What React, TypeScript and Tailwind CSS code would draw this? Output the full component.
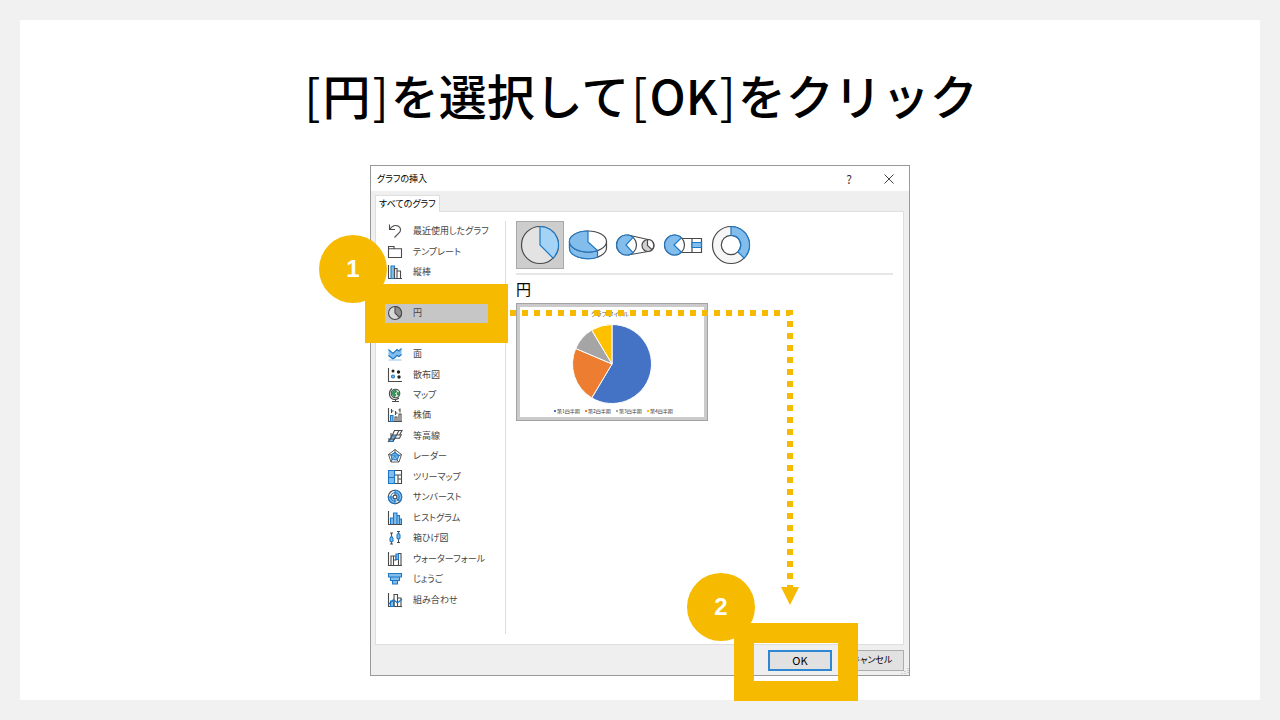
import type { ReactNode } from "react";

const INK = "#4a4a4a";
const BLUE = "#1f78c4";
const SKY = "#83bdec";

const UI_FONT =
  "font-['Noto_Sans_CJK_JP',sans-serif] [font-feature-settings:'palt']";

const Icon = ({ children }: { children: ReactNode }) => (
  <svg
    viewBox="0 0 16 16"
    className="size-4 shrink-0"
    fill="none"
    stroke={INK}
    strokeWidth="1.1"
    aria-hidden="true"
  >
    {children}
  </svg>
);

const AXES = "M1.5 1v13.5H15";

// null keeps the slot of a row that lies behind the highlight frame
const CATEGORIES: ({ label: string; icon: ReactNode } | null)[] = [
  {
    label: "最近使用したグラフ",
    icon: <path d="M2.5 1.500v5H8M2.800 6.300C5 3 8.500 1.500 11.500 3.200c3 1.900 2.300 5 .3 7L7.500 14.500" />,
  },
  {
    label: "テンプレート",
    icon: <path d="M1.500 13.500V2.500H7v2.200h7.500v8.800zM1.500 4.700H7" />,
  },
  {
    label: "縦棒",
    icon: (
      <>
        <path d={AXES} />
        <path d="M4 14.500V2h3.500v12.500z" fill={SKY} stroke={BLUE} />
        <path d="M7.500 14.500V4.500H10v10M10 7h3.500v7.500" />
      </>
    ),
  },
  null,
  {
    label: "円",
    icon: (
      <>
        <circle cx="8" cy="8" r="6.500" fill="#d8d8d8" />
        <path d="M8 1.500V8l4.600 4.600A6.500 6.500 0 0 0 8 1.500z" fill="#8f8f8f" />
      </>
    ),
  },
  null,
  {
    label: "面",
    icon: (
      <>
        <path d="M1.500 3.500L6 7.500l4-4 2 1.500 2.500-2.500V9L12 11l-2-1-4 3.500L1.500 10z" fill={SKY} stroke="none" />
        <path d="M1.500 3.500L6 7.500l4-4 2 1.500 2.500-2.500M1.500 9.500L6 13l4-3.500 2 1 2.500-2" stroke={BLUE} />
        <path d="M1.500 14h13" stroke="#9fc9ec" />
      </>
    ),
  },
  {
    label: "散布図",
    icon: (
      <>
        <path d={AXES} />
        <g fill="#222" stroke="none">
          <circle cx="6" cy="4" r="1.500" />
          <circle cx="11.500" cy="5" r="1.700" />
          <circle cx="12" cy="10" r="1.700" />
        </g>
        <circle cx="6" cy="9.500" r="1.500" fill={SKY} stroke={BLUE} />
      </>
    ),
  },
  {
    label: "マップ",
    icon: (
      <>
        <circle cx="8.500" cy="6.500" r="4.300" fill="#eef7f0" />
        <path d="M6 4l3-1 .5 2-2 1.500L9 8l-1.500 2L5 7zM10.500 5l1.500 1-.5 2.500-1.500-1z" fill="#2f9c57" stroke="#237a45" strokeWidth=".7" />
        <path d="M5 1.500C1.500 4 1.500 10 5.500 12c3 1.200 5 .2 6.500-1M8.500 12.500v2M5 14.500h7" />
      </>
    ),
  },
  {
    label: "株価",
    icon: (
      <>
        <path d={AXES} />
        <path d="M3.500 14.500V8.500H6v6z" fill={SKY} stroke={BLUE} />
        <path d="M8 14.500V10h2v4.500M12 14.500V7h2v7.500M4.500 2v4M8.500 4v4M8.500 6h2M4.500 4h2M13 1.500v4M11.500 3h1.500" />
      </>
    ),
  },
  {
    label: "等高線",
    icon: (
      <>
        <path d="M2 13.500L5 8h4l-3 5.500z" fill={SKY} stroke={BLUE} />
        <path d="M5 8l2.500-5.500H15L12.500 7H6M9 8l3-5.500M6 13.500L7.500 10l5 .2L14.500 6M4 5v6M1 11h7M1 14l2-3" />
      </>
    ),
  },
  {
    label: "レーダー",
    icon: (
      <>
        <path d="M8 1.500l6.500 5-2.500 7.500H4L1.500 6.500z" strokeWidth=".9" />
        <path d="M8 4.500l4 3-2 4.500L5 11.500 4 7z" fill={SKY} stroke={BLUE} />
        <path d="M8 1.500v3M14.500 6.500L12 7.500M12 14l-2-2M4 14l1-2.500M1.500 6.500L4 7" strokeWidth=".9" />
        <path d="M8 4.500V8l4-.5M8 8l2 4M8 8l-3 3.500M8 8L4 7" stroke={BLUE} strokeWidth=".6" />
      </>
    ),
  },
  {
    label: "ツリーマップ",
    icon: (
      <>
        <path d="M7.500 1.500h7v13h-7zM7.500 6h7M11 6v8.500M11 10h3.500" />
        <path d="M1.500 1.500h6v13h-6z" fill={SKY} stroke={BLUE} />
        <path d="M1.500 8.500h6" stroke={BLUE} />
      </>
    ),
  },
  {
    label: "サンバースト",
    icon: (
      <>
        <circle cx="8" cy="8" r="6.700" fill="#fff" />
        <path d="M8 1.300a6.700 6.700 0 0 1 4.700 11.400L8 8zM1.300 8A6.700 6.700 0 0 0 8 14.700V8z" fill={SKY} stroke={BLUE} />
        <circle cx="8" cy="8" r="4.200" stroke={BLUE} />
        <circle cx="8" cy="8" r="1.900" fill="#fff" />
      </>
    ),
  },
  {
    label: "ヒストグラム",
    icon: (
      <>
        <path d="M3.500 14.500V8h3v6.500zM6.500 14.500V3h3.500v11.500zM10 14.500v-9h2.500v9zM12.500 14.500V9h2v5.500z" fill={SKY} stroke={BLUE} />
        <path d={AXES} />
      </>
    ),
  },
  {
    label: "箱ひげ図",
    icon: (
      <>
        <path d="M4.500 3v11M3 3h3M3 14h3M11.500 1.500v11M10 1.500h3M10 12.500h3" />
        <path d="M3 8.500L4.500 6 6 8.500v2.500L4.500 12 3 11zM10 5l1.500-2L13 5v3l-1.500 1.500L10 8z" fill={SKY} stroke={BLUE} />
      </>
    ),
  },
  {
    label: "ウォーターフォール",
    icon: (
      <>
        <path d="M1.500 1v13.500H15M4 14.500V5h2.500v9.500M6.500 5H9v4H6.500M11.500 14.500V2.500H14v12" />
        <path d="M9 3h2.500v5.500H9z" fill={SKY} stroke={BLUE} />
      </>
    ),
  },
  {
    label: "じょうご",
    icon: (
      <path d="M1.500 2.500h13v3.500h-13zM3.500 6h9v3.500h-9zM5.500 9.500h5V13h-5z" fill={SKY} stroke={BLUE} />
    ),
  },
  {
    label: "組み合わせ",
    icon: (
      <>
        <path d={AXES} />
        <path d="M3.500 14.500V9H7v5.500z" fill={SKY} stroke={BLUE} />
        <path d="M7 14.500V2.500h3.500v12M10.500 6H14v8.500" />
        <path d="M2 12l4.500-4.500 4 3.500L15 7" stroke={BLUE} />
      </>
    ),
  },
];

const PIE_TYPES: { name: string; art: ReactNode }[] = [
  {
    name: "円",
    art: (
      <>
        <circle cx="24" cy="24" r="18.500" fill="#e3e3e3" />
        <path d="M24 5.500V24l13.100 13.100A18.500 18.500 0 0 0 24 5.500z" fill="#a5d3f5" stroke={BLUE} />
      </>
    ),
  },
  {
    name: "3-D 円",
    art: (
      <>
        <path d="M5.500 20.500v6.500a18.500 10.500 0 0 0 37 0v-6.500" fill="#fafafa" />
        <path d="M5.500 20.500v6.500a18.500 10.500 0 0 0 28 9.200V30z" fill={SKY} stroke={BLUE} />
        <ellipse cx="24" cy="20.500" rx="18.500" ry="10.500" fill="#fff" />
        <path d="M24 10a18.500 10.500 0 1 0 9.500 19.500L24 21z" fill={SKY} stroke={BLUE} />
      </>
    ),
  },
  {
    name: "補助円グラフ付き円",
    art: (
      <>
        <path d="M16 14l20 4.500M16 34l20-3.500" />
        <circle cx="14.500" cy="24" r="10" fill="#fff" />
        <path d="M21 16.300a10 10 0 1 0 0 15.400L14 24z" fill={SKY} stroke={BLUE} />
        <circle cx="36" cy="24.500" r="6" fill="#d0d0d0" />
        <path d="M35.500 18.500v6l4.500 4.200a6 6 0 0 0-4.500-10.200z" fill="#fff" />
      </>
    ),
  },
  {
    name: "補助縦棒グラフ付き円",
    art: (
      <>
        <path d="M20 17.500h21.500v14H20M32 17.500v14" />
        <circle cx="14.500" cy="24" r="10" fill="#fff" />
        <path d="M21.500 16.800a10 10 0 1 0 0 14.400L14 24z" fill={SKY} stroke={BLUE} />
        <path d="M32 21.500h9.500v5H32z" fill={SKY} stroke={BLUE} />
      </>
    ),
  },
  {
    name: "ドーナツ",
    art: (
      <>
        <circle cx="23" cy="24" r="14" stroke="#f6f6f6" strokeWidth="9" />
        <circle cx="23" cy="24" r="18.500" />
        <circle cx="23" cy="24" r="9.700" fill="#fff" />
        <path d="M23 5.500a18.500 18.500 0 0 1 13.100 31.600l-6.200-6.200A9.700 9.700 0 0 0 23 14.300z" fill={SKY} stroke={BLUE} />
      </>
    ),
  },
];

const QUARTERS = [
  { label: "第1四半期", value: 8.2, color: "#4472c4" },
  { label: "第2四半期", value: 3.2, color: "#ed7d31" },
  { label: "第3四半期", value: 1.4, color: "#a5a5a5" },
  { label: "第4四半期", value: 1.2, color: "#ffc000" },
];

const PieChart = () => {
  const total = QUARTERS.reduce((sum, q) => sum + q.value, 0);
  const point = (share: number) => {
    const a = share * Math.PI * 2;
    return `${92 + 39.5 * Math.sin(a)} ${57 - 39.5 * Math.cos(a)}`;
  };
  let start = 0;

  return (
    <svg viewBox="0 0 184 110" className="block w-full bg-white">
      <text x="90" y="9" textAnchor="middle" fontSize="6" fill="#595959">
        グラフ タイトル
      </text>
      {QUARTERS.map((q) => {
        const from = start / total;
        start += q.value;
        const to = start / total;
        return (
          <path
            key={q.label}
            d={`M92 57L${point(from)}A39.500 39.500 0 ${to - from > 0.5 ? 1 : 0} 1 ${point(to)}Z`}
            fill={q.color}
            stroke="#fff"
            strokeWidth="1"
          />
        );
      })}
      {QUARTERS.map((q, i) => (
        <g key={q.label}>
          <rect x={34 + i * 31} y="103" width="2" height="2" fill={q.color} />
          <text x={37 + i * 31} y="106" fontSize="5" fill="#333">
            {q.label}
          </text>
        </g>
      ))}
    </svg>
  );
};

const Bracket = ({ children }: { children: ReactNode }) => (
  <span className="px-0.5 font-normal">{children}</span>
);

const Step = ({ n, place }: { n: number; place: string }) => (
  <span
    className={`absolute flex size-[68px] items-center justify-center rounded-full bg-[#f6ba00] font-['Liberation_Sans',sans-serif] text-2xl font-bold text-white ${place}`}
  >
    {n}
  </span>
);

const ChartDialog = () => (
  <section
    aria-label="グラフの挿入"
    className={`flex min-h-[511px] flex-col border border-[#999] bg-[#efefef] text-[9px] leading-4 ${UI_FONT}`}
  >
    <header className="flex h-[25px] items-center bg-white pl-1.5 text-black">
      <span className="flex-1">グラフの挿入</span>
      <button type="button" aria-label="ヘルプ" className="w-10 text-xs text-[#333]">
        ?
      </button>
      <button type="button" aria-label="閉じる" className="flex w-10 justify-center">
        <svg viewBox="0 0 10 10" className="size-2.5" stroke="#444" fill="none">
          <path d="M.5.5l9 9M9.500.5l-9 9" />
        </svg>
      </button>
    </header>

    <div className="flex flex-1 flex-col pt-1 pr-[5px] pl-1">
      <button
        type="button"
        className="z-10 -mb-px self-start border border-b-0 border-[#dedede] bg-white px-[3px] text-black"
      >
        すべてのグラフ
      </button>
      <div className="flex flex-1 border border-[#dedede] bg-white pt-[9px] pr-2.5 pb-2.5">
        <ul className="mb-6 flex w-[129px] flex-col pr-4 pl-[9px]">
          {CATEGORIES.map((item, i) => (
            <li key={i} className="flex min-h-5 flex-1">
              {item && (
                <button
                  type="button"
                  className={`flex flex-1 items-center gap-2.5 pl-0.5 text-left whitespace-nowrap text-[#444] ${
                    item.label === "円" ? "bg-[#c6c6c6]" : ""
                  }`}
                >
                  <Icon>{item.icon}</Icon>
                  {item.label}
                </button>
              )}
            </li>
          ))}
        </ul>

        <div className="flex-1 border-l border-[#dcdcdc] pl-2.5">
          <div className="flex border-b-2 border-[#e6e6e6] pb-1">
            {PIE_TYPES.map((type, i) => (
              <button
                key={type.name}
                type="button"
                aria-label={type.name}
                className={`size-12 ${i === 0 ? "bg-[#cdcdcd] outline -outline-offset-1 outline-[#a8a8a8]" : ""}`}
              >
                <svg viewBox="0 0 48 48" fill="none" stroke={INK} strokeWidth="1.2">
                  {type.art}
                </svg>
              </button>
            ))}
          </div>
          <h2 className="mt-0.5 mb-0.5 text-[15px] leading-6 text-black">円</h2>
          <div className="w-48 border border-[#a3a3a3] bg-[#cbcbcb] p-[3px]">
            <PieChart />
          </div>
        </div>
      </div>
    </div>

    <footer className="flex h-[30px] items-center justify-end gap-2 pr-[5px] text-black">
      <button type="button" className="h-[21px] w-16 border-2 border-[#2f86d1] bg-[#e1e1e1] text-[11px]">
        OK
      </button>
      <button type="button" className="h-[21px] w-16 border border-[#adadad] bg-[#e1e1e1]">
        キャンセル
      </button>
    </footer>
  </section>
);

const App = () => (
  <div className="flex min-h-screen bg-[#f1f1f1] p-5">
    <main className="flex flex-1 flex-col items-center bg-white pt-[38px] pb-6">
      <h1 className="font-['Noto_Sans_CJK_JP',sans-serif] text-5xl leading-[72px] font-medium text-black">
        <Bracket>[</Bracket>円<Bracket>]</Bracket>
        を選択して
        <Bracket>[</Bracket>OK<Bracket>]</Bracket>
        をクリック
      </h1>

      <div className="relative mt-[35px] w-full max-w-[540px]">
        <ChartDialog />

        {/* Step callouts over the dialog */}
        <Step n={1} place="top-[70px] -left-[51px]" />
        <span className="absolute top-[119px] -left-[5px] h-[59px] w-[143px] border-20 border-[#f6ba00]" />
        <svg
          viewBox="0 0 540 511"
          className="pointer-events-none absolute inset-0 size-full"
          fill="none"
          aria-hidden="true"
        >
          <path d="M140 148H420V422" stroke="#f6ba00" strokeWidth="6" strokeDasharray="6 6" />
          <path d="M411 422h18l-9 18z" fill="#f6ba00" />
          <path d="M538 503v6M535 506v3M532 508v1" stroke="#aaa" strokeDasharray="1 1" />
        </svg>
        <Step n={2} place="right-[155px] bottom-[35px]" />
        <span className="absolute right-[52px] -bottom-[25px] h-[78px] w-[124px] border-20 border-[#f6ba00]" />
      </div>
    </main>
  </div>
);

export default App;
